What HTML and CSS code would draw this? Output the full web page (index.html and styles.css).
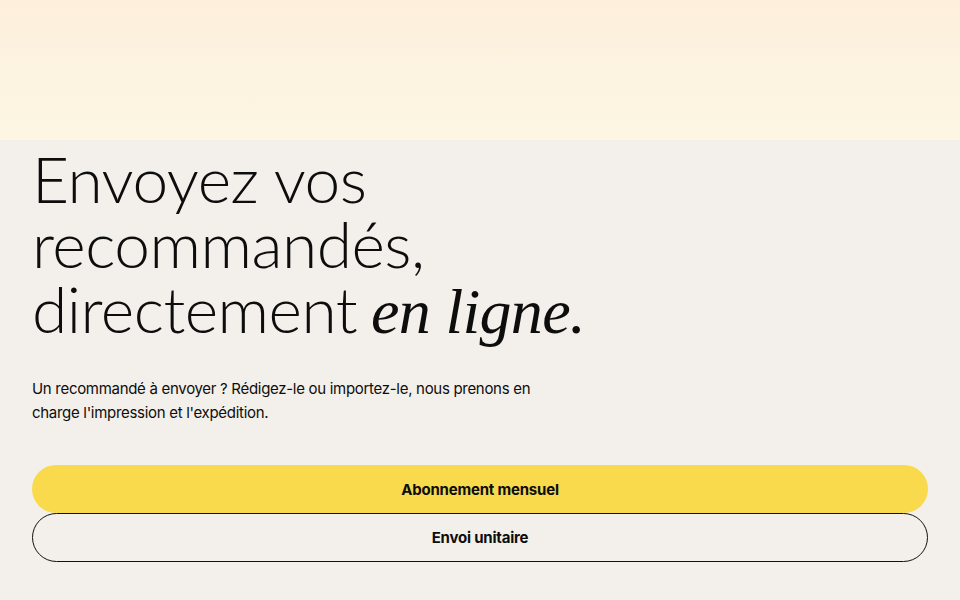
FILE: index.html
```html
<!DOCTYPE html>
<html lang="fr">
<head>
<meta charset="utf-8">
<title>Envoyez vos recommandés</title>
<link rel="stylesheet" href="styles.css">
</head>
<body>
<div class="band"></div>
<main class="hero">
  <h1 class="title">Envoyez vos<br>recommandés,<br>directement <em class="accent">en ligne.</em></h1>
  <p class="lead">Un recommandé à envoyer ? Rédigez-le ou importez-le, nous prenons en charge l'impression et l'expédition.</p>
  <div class="actions">
    <a class="btn btn-primary" href="#">Abonnement mensuel</a>
    <a class="btn btn-outline" href="#">Envoi unitaire</a>
  </div>
</main>
</body>
</html>
```
FILE: styles.css
```css
html, body {
  margin: 0;
  padding: 0;
}
body {
  background: #f3f0eb;
  color: #0d0d0d;
  font-family: Inter, "Liberation Sans", sans-serif;
  width: 960px;
  height: 600px;
  overflow: hidden;
}
.band {
  height: 140px;
  background: linear-gradient(180deg, #fdefdb 0%, #fcf4e1 60%, #fcf6e3 100%);
}
.hero {
  padding: 6px 32px 0;
}
.title {
  margin: 0;
  font-family: Lato, Inter, sans-serif;
  font-weight: 300;
  font-size: 64px;
  line-height: 65px;
  letter-spacing: -0.5px;
}
.accent {
  font-family: "Liberation Serif", serif;
  font-style: italic;
  font-weight: 400;
  letter-spacing: -0.7px;
  margin-left: -3px;
}
.lead {
  margin: 33px 0 0;
  width: 520px;
  font-size: 15px;
  line-height: 24px;
  letter-spacing: -0.3px;
}
.actions {
  margin-top: 40px;
  display: flex;
  flex-direction: column;
}
.btn {
  display: flex;
  align-items: center;
  justify-content: center;
  height: 48px;
  border-radius: 999px;
  font-size: 15px;
  font-weight: 700;
  letter-spacing: -0.2px;
  color: #0d0d0d;
  text-decoration: none;
  box-sizing: border-box;
}
.btn-primary {
  background: #f8da4c;
}
.btn-outline {
  height: 49px;
  border: 1px solid #111;
}
```
